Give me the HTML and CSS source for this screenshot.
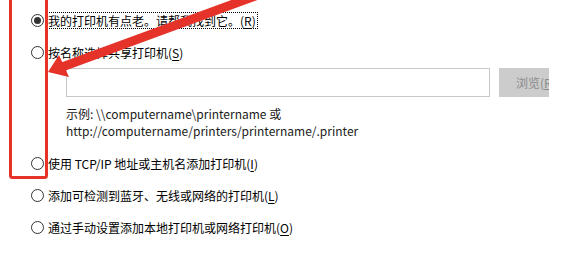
FILE: index.html
```html
<!DOCTYPE html>
<html lang="zh-CN">
<head>
    <meta charset="UTF-8">
    <title>添加打印机</title>
    <link rel="stylesheet" href="styles.css">
</head>
<body>
    <div class="page">
        <!-- Option list -->
        <div class="option">
            <span class="radio checked"></span>
            <span class="label focus">我的打印机有点老。请帮我找到它。(<u>R</u>)</span>
        </div>
        <div class="option">
            <span class="radio"></span>
            <span class="label">按名称选择共享打印机(<u>S</u>)</span>
        </div>

        <!-- Shared printer path -->
        <div class="share">
            <div class="path-row">
                <div class="path-input"></div>
                <div class="browse">浏览(<u>R</u>)...</div>
            </div>
            <p class="example">示例: \\computername\printername 或<br>http://computername/printers/printername/.printer</p>
        </div>

        <div class="option">
            <span class="radio"></span>
            <span class="label">使用 TCP/IP 地址或主机名添加打印机(<u>I</u>)</span>
        </div>
        <div class="option">
            <span class="radio"></span>
            <span class="label">添加可检测到蓝牙、无线或网络的打印机(<u>L</u>)</span>
        </div>
        <div class="option">
            <span class="radio"></span>
            <span class="label">通过手动设置添加本地打印机或网络打印机(<u>O</u>)</span>
        </div>
    </div>

    <!-- Red annotation drawn over the dialog -->
    <svg class="markup" width="584" height="276" viewBox="0 0 584 276">
        <rect x="10.5" y="-10" width="36" height="187.5" rx="2" fill="none" stroke="#e5332a" stroke-width="3"/>
        <path d="M62 67 L258 -5" fill="none" stroke="#e5332a" stroke-width="9"/>
        <polygon points="48,72 59,55 69,77" fill="#e5332a"/>
    </svg>
</body>
</html>
```
FILE: styles.css
```css
body {
    margin: 0;
    background: #fff;
    font-family: "Noto Sans CJK SC", "Noto Sans", sans-serif;
    font-size: 12px;
    color: #000;
}
.page {
    width: 584px;
    height: 276px;
    padding: 4px 0 0 31px;
    box-sizing: border-box;
    overflow: hidden;
}
.option {
    display: flex;
    align-items: center;
    height: 32px;
}
.radio {
    width: 11px;
    height: 11px;
    border: 1px solid #333;
    border-radius: 50%;
    display: flex;
    align-items: center;
    justify-content: center;
    margin-right: 3px;
    flex-shrink: 0;
}
.radio.checked::after {
    content: "";
    width: 7px;
    height: 7px;
    border-radius: 50%;
    background: #333;
}
.label {
    padding: 0 1px 0 0;
    line-height: 15px;
    border: 1px dotted transparent;
}
.label.focus {
    border-color: #000;
}
.label u {
    text-underline-offset: 2px;
}
.share {
    padding-left: 35px;
}
.path-row {
    display: flex;
    gap: 9px;
    width: 483px;
    overflow: hidden;
}
.path-input {
    width: 422px;
    height: 27px;
    border: 1px solid #c8c8c8;
    flex-shrink: 0;
}
.browse {
    width: 75px;
    height: 29px;
    flex-shrink: 0;
    background: #cccccc;
    color: #8a8a8a;
    box-sizing: border-box;
    padding-left: 17px;
    line-height: 29px;
}
.example {
    margin: 8px 0;
    line-height: 17px;
    color: #1a1a1a;
}
.markup {
    position: absolute;
    left: 0;
    top: 0;
    pointer-events: none;
}
```
